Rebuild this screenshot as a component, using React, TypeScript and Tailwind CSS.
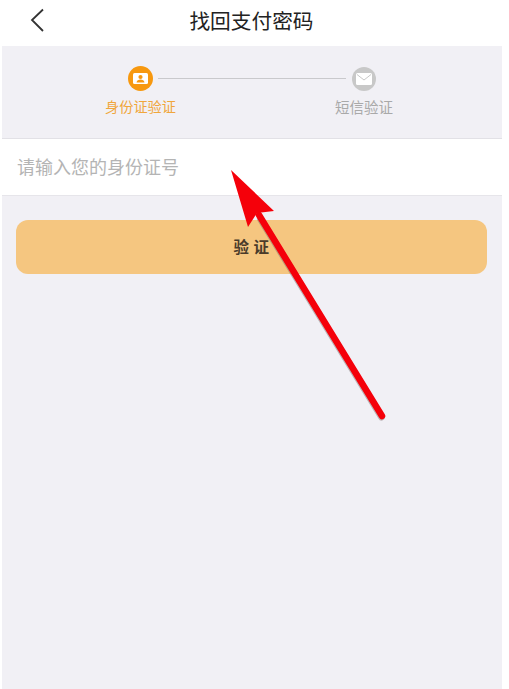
function IdIcon() {
  return (
    <div className="flex h-[25px] w-[25px] items-center justify-center rounded-full bg-[#f7980f]">
      <svg width="15" height="11" viewBox="0 0 15 11">
        <rect width="15" height="11" rx="1.5" fill="#fff" />
        <circle cx="7.5" cy="4" r="2.1" fill="#f7980f" />
        <path d="M3.5 9.5c.4-2 2-2.9 4-2.9s3.600.9 4 2.900z" fill="#f7980f" />
      </svg>
    </div>
  )
}

function MailIcon() {
  return (
    <div className="flex h-6 w-6 items-center justify-center rounded-full bg-[#c8c8c8]">
      <svg width="16" height="12" viewBox="0 0 16 12">
        <rect width="16" height="12" rx="1.500" fill="#fff" />
        <path d="M1 1.500l7 5.500 7-5.500" fill="none" stroke="#c8c8c8" strokeWidth="1" />
      </svg>
    </div>
  )
}

export default function App() {
  return (
    <div className="relative h-[689px] w-[509px] overflow-hidden bg-white pl-[2px] pr-[7px] font-['Noto_Sans_CJK_SC',sans-serif]">
      <div className="relative flex h-[46px] items-center justify-center pb-[6px] pr-[1px]">
        <svg className="absolute left-[28px] top-[8px]" width="15" height="24" viewBox="0 0 15 24">
          <path d="M13 1.500L2 12l11 11" fill="none" stroke="#333" strokeWidth="1.800" />
        </svg>
        <span className="text-[20.700px] leading-none text-[#222]">找回支付密码</span>
      </div>

      <div className="flex h-full flex-col bg-[#f1f0f5]">
        <div className="h-[93px] border-b border-[#e2e1e6] pl-[103px] pr-[109px] pt-5">
          <div className="flex items-center pl-[23px] pr-[17px]">
            <IdIcon />
            <div className="ml-[5px] mr-[6px] h-px flex-1 bg-[#c9c9cc]" />
            <MailIcon />
          </div>
          <div className="mt-[6px] flex items-start justify-between">
            <span className="text-[14.200px] leading-[18px] text-[#f0a63c]">身份证验证</span>
            <span className="mt-px text-[14.500px] leading-[18px] text-[#a9a9a9]">短信验证</span>
          </div>
        </div>

        <div className="flex h-[57px] items-center border-b border-[#e6e5ea] bg-white pb-[2px] pl-[15px]">
          <span className="text-lg leading-none text-[#b4b4b4]">请输入您的身份证号</span>
        </div>

        <button className="ml-[14px] mt-[24px] flex h-[54px] w-[471px] items-center justify-center rounded-xl bg-[#f5c680] pb-[1px] text-[15.500px] font-semibold tracking-[0.5px] text-[#4a3b2a]">
          验 证
        </button>
      </div>

      <svg className="absolute left-0 top-0" width="509" height="689" viewBox="0 0 509 689">
        <path
          d="M383 416L262 218"
          fill="none"
          stroke="#7a6a6a"
          strokeOpacity="0.45"
          strokeWidth="7"
          strokeLinecap="round"
          transform="translate(-1.500 1)"
        />
        <path d="M382 416L259 215" fill="none" stroke="#f5000a" strokeWidth="6.500" strokeLinecap="round" />
        <path d="M231 170L274 211 257 213 248 227z" fill="#f5000a" />
      </svg>
    </div>
  )
}
